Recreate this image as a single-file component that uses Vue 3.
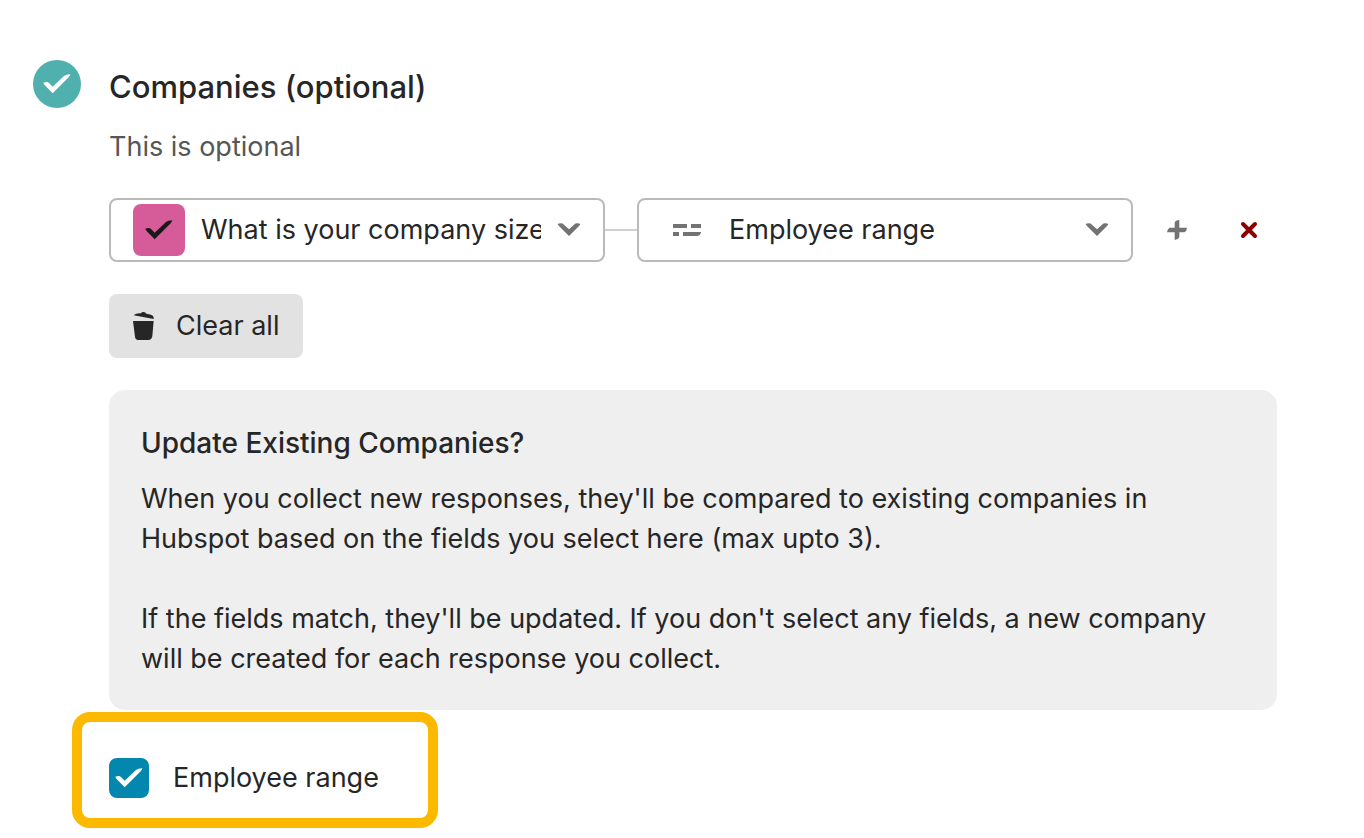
<script setup>
import { ref } from 'vue'

const question = ref('What is your company size?')
const property = ref('Employee range')
const matchRange = ref(true)

const checkPath = 'M1 26Q6 24 12 24Q16 25 19 28L29 38L63 6Q69 1 82 1Q81 6 77 10L29 58L7 35Q2 31 1 26Z'
const chevronPath = 'M2 3Q5 1 11 1Q17 1 21 5L36 19L51 5Q55 1 61 1Q67 1 70 3Q69 6 66 9L36 39L6 9Q3 6 2 3Z'
</script>

<template>
  <main class="step">
    <span class="status">
      <svg class="check" viewBox="0 0 84 60" aria-hidden="true"><path :d="checkPath" /></svg>
    </span>
    <section class="content">
      <h1>Companies (optional)</h1>
      <p class="subtitle">This is optional</p>

      <div class="mapping">
        <div class="picker">
          <span class="tile">
            <svg class="check" viewBox="0 0 84 60" aria-hidden="true"><path :d="checkPath" /></svg>
          </span>
          <select v-model="question" class="with-tile" aria-label="Question">
            <option>What is your company size?</option>
          </select>
          <svg class="chevron" viewBox="0 0 72 42" aria-hidden="true"><path :d="chevronPath" /></svg>
        </div>
        <span class="connector"></span>
        <div class="picker">
          <svg class="field-icon" viewBox="0 0 84 36" aria-hidden="true">
            <path d="M0 0H42V12H0ZM54 0H84V12H54ZM0 24H18V36H0ZM30 24H84Q83 35 73 36H30Z" />
          </svg>
          <select v-model="property" class="with-icon" aria-label="Company field">
            <option>Employee range</option>
          </select>
          <svg class="chevron" viewBox="0 0 72 42" aria-hidden="true"><path :d="chevronPath" /></svg>
        </div>
        <div class="actions">
          <button type="button" class="icon-button" aria-label="Add mapping">
            <svg class="plus" viewBox="0 0 60 60" aria-hidden="true">
              <path d="M23 8Q25 1 37 0V23H60Q59 34 52 37H37V52Q34 59 23 60V37H0Q1 26 8 23H23Z" />
            </svg>
          </button>
          <button type="button" class="icon-button" aria-label="Remove mapping">
            <svg class="cross" viewBox="0 0 54 54" aria-hidden="true">
              <path d="M9 9L45 45M45 9L9 45" />
            </svg>
          </button>
        </div>
      </div>

      <button type="button" class="clear">
        <svg class="trash" viewBox="0 0 63 84" aria-hidden="true">
          <path d="M0 27H62L58 72Q56 84 46 84H18Q7 84 6 74Z" />
          <path d="M2 10Q8 3 24 4Q25 0 32 0Q38 0 40 5Q58 8 60 12Q63 16 62 21Z" />
        </svg>
        Clear all
      </button>

      <div class="info">
        <h2>Update Existing Companies?</h2>
        <p>When you collect new responses, they'll be compared to existing companies in Hubspot based on the fields you select here (max upto 3).</p>
        <p>If the fields match, they'll be updated. If you don't select any fields, a new company will be created for each response you collect.</p>
      </div>

      <div class="highlight">
        <label class="option">
          <span class="box">
            <input v-model="matchRange" type="checkbox" />
            <svg v-if="matchRange" class="check" viewBox="0 0 84 60" aria-hidden="true"><path :d="checkPath" /></svg>
          </span>
          Employee range
        </label>
      </div>
    </section>
  </main>
</template>

<style>
body {
  margin: 0;
  background: #fff;
}
</style>

<style scoped>
.step {
  display: flex;
  gap: 28px;
  padding: 60px 87px 10px 33px;
  color: #262627;
  font: 400 27px/40px Inter, "Liberation Sans", sans-serif;
}
.status {
  display: grid;
  place-items: center;
  flex: none;
  width: 48px;
  height: 48px;
  border-radius: 50%;
  background: #4fb0ae;
  color: #fff;
}
svg {
  display: block;
  fill: currentColor;
}
.check {
  width: 28px;
  height: 20px;
}
.content {
  flex: 1;
  min-width: 0;
}
h1, h2, p {
  margin: 0;
}
h1 {
  padding-top: 3px;
  font-size: 31px;
  font-weight: 500;
  line-height: 48px;
}
.subtitle {
  margin: 16px 0 31px;
  color: #565657;
}
.mapping {
  display: flex;
  align-items: center;
}
.picker {
  display: grid;
  flex: 1;
  min-width: 0;
  height: 64px;
  align-items: center;
}
.picker > * {
  grid-area: 1 / 1;
}
.picker > :not(select) {
  z-index: 1;
  pointer-events: none;
}
select {
  width: 100%;
  height: 100%;
  padding: 0 62px 0 0;
  border: 2px solid #bababa;
  border-radius: 8px;
  background: #fff;
  color: inherit;
  font: inherit;
  appearance: none;
}
.with-tile,
.with-icon {
  padding-left: 90px;
}
.tile {
  display: grid;
  place-items: center;
  width: 52px;
  height: 52px;
  margin-left: 24px;
  border-radius: 8px;
  background: #d65c99;
  color: #191919;
}
.field-icon {
  width: 28px;
  height: 12px;
  margin-left: 36px;
  color: #737373;
}
.chevron {
  justify-self: end;
  width: 24px;
  height: 14px;
  margin-right: 24px;
  color: #737373;
}
.connector {
  width: 32px;
  height: 2px;
  background: #d0d0d0;
}
.actions {
  display: flex;
  gap: 16px;
  margin-left: 16px;
}
button {
  border: 0;
  color: inherit;
  font: inherit;
}
.icon-button {
  display: grid;
  place-items: center;
  width: 56px;
  height: 56px;
  padding: 0;
  background: none;
}
.plus {
  width: 20px;
  height: 20px;
  color: #737373;
}
.cross {
  width: 18px;
  height: 18px;
  fill: none;
  stroke: #8b0000;
  stroke-width: 12;
  stroke-linecap: round;
}
.clear {
  display: flex;
  align-items: center;
  gap: 22px;
  height: 64px;
  margin: 32px 0;
  padding: 0 24px;
  border-radius: 8px;
  background: #e2e2e2;
}
.trash {
  width: 21px;
  height: 28px;
}
.info {
  padding: 33px 32px 31px;
  border-radius: 16px;
  background: #efefef;
}
.info h2 {
  margin-bottom: 16px;
  font-size: 28px;
  font-weight: 500;
}
.info p + p {
  margin-top: 40px;
}
.highlight {
  width: fit-content;
  margin: 2px 0 0 -37px;
  padding: 36px 49px 20px 27px;
  border: 10px solid #fcb900;
  border-radius: 18px;
}
.option {
  display: flex;
  align-items: center;
  gap: 24px;
}
.box {
  display: grid;
  place-items: center;
  color: #fff;
}
.box > * {
  grid-area: 1 / 1;
}
.box .check {
  z-index: 1;
  pointer-events: none;
}
input {
  width: 40px;
  height: 40px;
  margin: 0;
  border: 2px solid #0487af;
  border-radius: 8px;
  background: #fff;
  appearance: none;
}
input:checked {
  background: #0487af;
}
</style>
